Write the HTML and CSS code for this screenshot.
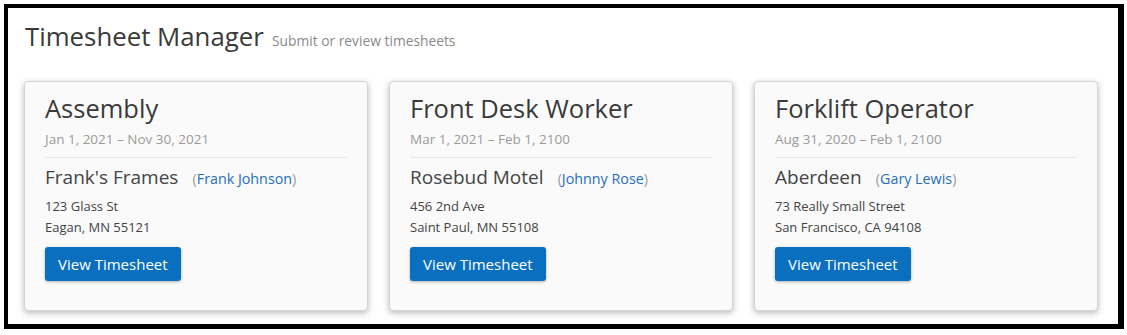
FILE: index.html
```html
<!DOCTYPE html>
<html>

<head>
    <meta charset="UTF-8">
    <link rel="stylesheet" href="styles.css">
</head>

<body>
    <div class="frame">
        <div class="page-header">
            <span class="page-title">Timesheet Manager</span>
            <span class="page-subtitle">Submit or review timesheets</span>
        </div>

        <div class="job-list">
            <div class="job-card">
                <div class="job-title">Assembly</div>
                <div class="job-dates">Jan 1, 2021 – Nov 30, 2021</div>
                <div class="employer">
                    <span class="employer-name">Frank's Frames</span>
                    <span class="contact">(<a href="#">Frank Johnson</a>)</span>
                </div>
                <div class="address">
                    <div>123 Glass St</div>
                    <div>Eagan, MN 55121</div>
                </div>
                <button class="btn">View Timesheet</button>
            </div>

            <div class="job-card">
                <div class="job-title">Front Desk Worker</div>
                <div class="job-dates">Mar 1, 2021 – Feb 1, 2100</div>
                <div class="employer">
                    <span class="employer-name">Rosebud Motel</span>
                    <span class="contact">(<a href="#">Johnny Rose</a>)</span>
                </div>
                <div class="address">
                    <div>456 2nd Ave</div>
                    <div>Saint Paul, MN 55108</div>
                </div>
                <button class="btn">View Timesheet</button>
            </div>

            <div class="job-card">
                <div class="job-title">Forklift Operator</div>
                <div class="job-dates">Aug 31, 2020 – Feb 1, 2100</div>
                <div class="employer">
                    <span class="employer-name">Aberdeen</span>
                    <span class="contact">(<a href="#">Gary Lewis</a>)</span>
                </div>
                <div class="address">
                    <div>73 Really Small Street</div>
                    <div>San Francisco, CA 94108</div>
                </div>
                <button class="btn">View Timesheet</button>
            </div>
        </div>
    </div>
</body>

</html>
```
FILE: styles.css
```css
body {
    margin: 0;
    padding: 4px;
    background: #fff;
    font-family: "Open Sans", "Noto Sans", sans-serif;
    color: #444;
}

.frame {
    width: 1120px;
    box-sizing: border-box;
    border: solid #000;
    border-width: 4px 6px 5px 4px;
    padding: 13px 20px 13px 16px;
}

.page-header {
    height: 30px;
    line-height: 30px;
    margin-bottom: 30px;
}

.page-title {
    font-size: 25.8px;
    color: #3a3a3a;
    margin-left: 1px;
}

.page-subtitle {
    margin-left: 4px;
    font-size: 13.8px;
    color: #8a8a8a;
}

.job-list {
    display: grid;
    grid-template-columns: repeat(3, 1fr);
    gap: 21px;
}

.job-card {
    background: #fafafa;
    border: 1px solid #d4d4d4;
    border-radius: 4px;
    box-shadow: 0 2px 6px rgba(0, 0, 0, 0.28);
    padding: 10px 20px 29px 20px;
}

.job-title {
    font-size: 25.5px;
    line-height: 32px;
    color: #3a3a3a;
}

.job-dates {
    margin-top: 5px;
    font-size: 13.5px;
    line-height: 20px;
    color: #9a9a9a;
    padding-bottom: 8px;
    border-bottom: 1px solid #e8e8e8;
}

.employer {
    margin-top: 6px;
    line-height: 26px;
}

.employer-name {
    font-size: 19px;
    color: #444;
}

.contact {
    margin-left: 10px;
    font-size: 14.3px;
    color: #9a9a9a;
}

.contact a {
    color: #1f6fbb;
    text-decoration: none;
}

.address {
    margin-top: 4px;
    font-size: 13px;
    line-height: 21px;
    color: #444;
}

.btn {
    display: block;
    margin-top: 9px;
    height: 34px;
    padding: 0 13px;
    border: none;
    border-radius: 3px;
    background: #0b6fbf;
    color: #fff;
    font-family: inherit;
    font-size: 15px;
    line-height: 34px;
    box-shadow: 0 1px 3px rgba(0, 0, 0, 0.3);
    cursor: pointer;
}
```
